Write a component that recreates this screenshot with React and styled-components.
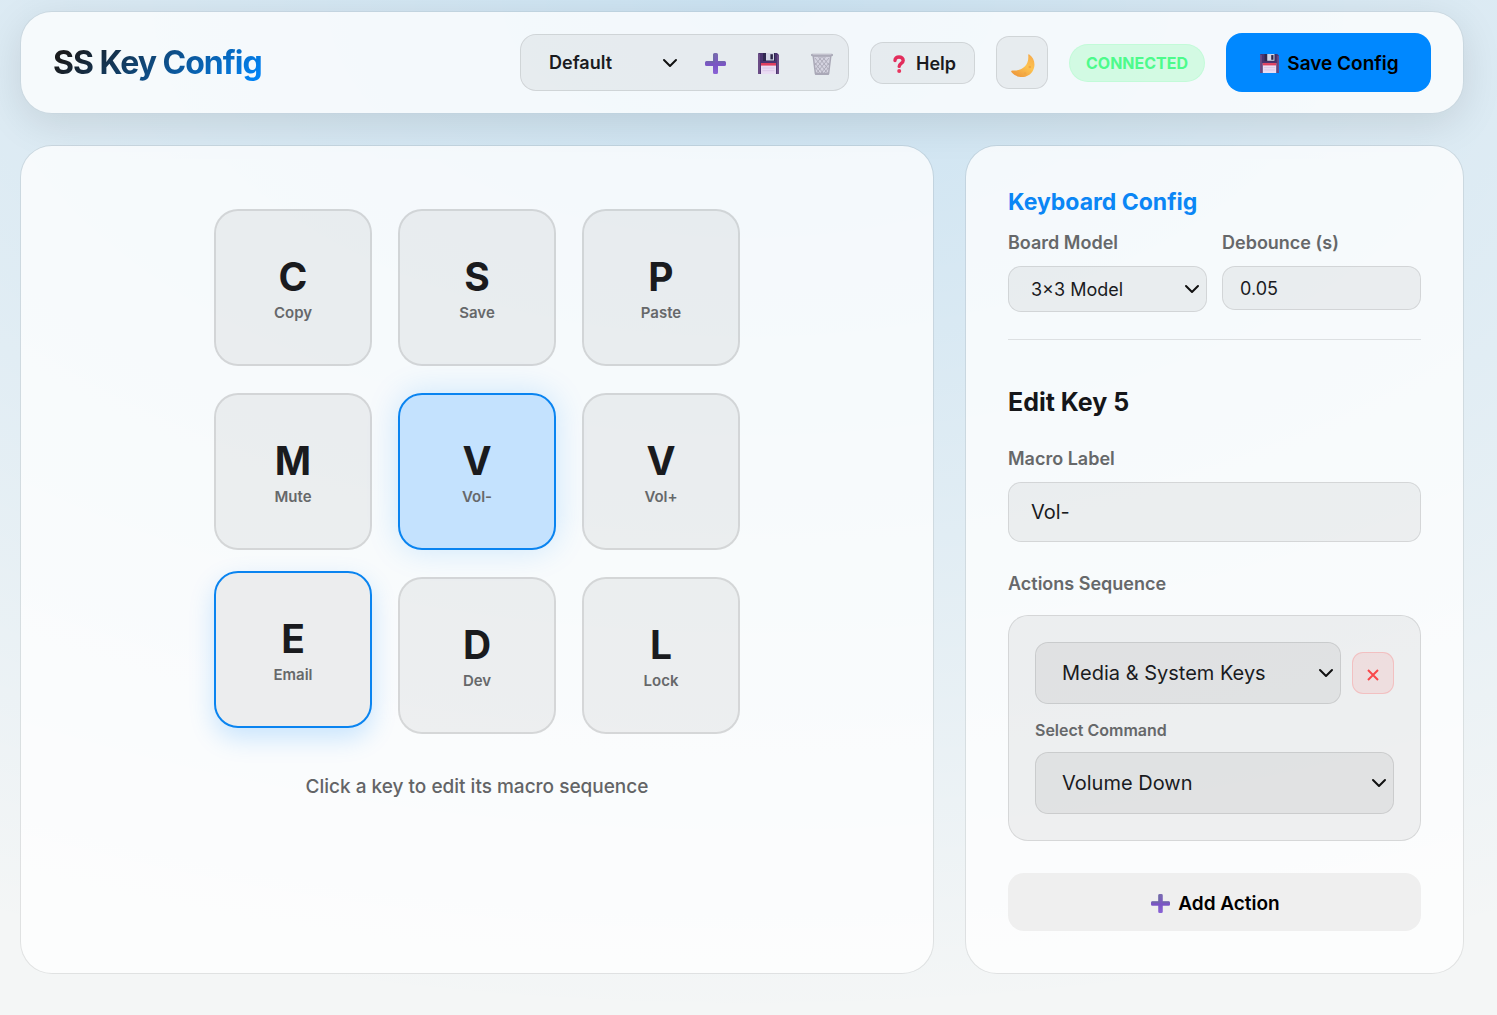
import React, { useId, useState } from "react";
import styled, { createGlobalStyle, css } from "styled-components";

const GlobalStyle = createGlobalStyle`
  *, *::before, *::after { box-sizing: border-box; }
  html { background: #f4f6f6; }
  body {
    margin: 0;
    min-height: 100vh;
    color: #1a1b1e;
    font-family: Inter, "Liberation Sans", sans-serif;
    background:
      radial-gradient(120% 100% at 50% 0%, rgba(0, 130, 220, 0.17), transparent 100%),
      #f4f6f6;
  }
  button, input, select { font-family: inherit; color: inherit; margin: 0; }
  button { cursor: pointer; }
  h1, h2, p { margin: 0; }
`;

const Page = styled.div`
  display: flex;
  flex-direction: column;
  gap: 31px;
  padding: 11px 33px 41px 20px;
`;

const glass = css`
  background: rgba(255, 255, 255, 0.75);
  background-clip: padding-box;
  border: 1px solid rgba(0, 0, 0, 0.08);
  border-radius: 32px;
`;

const Header = styled.header`
  ${glass}
  display: flex;
  align-items: center;
  justify-content: space-between;
  padding: 21px 32px;
  box-shadow: 0 10px 40px rgba(0, 0, 0, 0.1);
`;

const Title = styled.h1`
  font-size: 32px;
  line-height: 40px;
  font-weight: 700;
  letter-spacing: -1px;
  color: transparent;
  background: linear-gradient(135deg, #1a1b1e 10%, #0088ff 100%);
  background-clip: text;
  -webkit-background-clip: text;
`;

const Toolbar = styled.div`
  display: flex;
  align-items: center;
  gap: 21px;
`;

const ProfileBox = styled.div`
  display: flex;
  align-items: center;
  height: 57px;
  padding: 0 0 0 8px;
  border: 1px solid rgba(0, 0, 0, 0.1);
  border-radius: 16px;
  background: rgba(0, 0, 0, 0.05);
`;

const IconButton = styled.button`
  display: grid;
  place-items: center;
  width: 53px;
  height: 42px;
  padding: 2px 0 0;
  border: 0;
  background: none;
  opacity: ${(p) => (p.$faded ? 0.5 : 1)};
`;

const HelpButton = styled.button`
  display: flex;
  align-items: center;
  justify-content: center;
  gap: 9px;
  width: 105px;
  height: 42px;
  padding: 2px 0 0 2px;
  border: 1px solid rgba(0, 0, 0, 0.1);
  border-radius: 13px;
  background: rgba(0, 0, 0, 0.05);
  font-size: 18px;
  font-weight: 600;
`;

const ThemeButton = styled.button`
  display: grid;
  place-items: center;
  width: 52px;
  height: 53px;
  padding: 6px 0 0 2px;
  border: 1px solid rgba(0, 0, 0, 0.1);
  border-radius: 13px;
  background: rgba(0, 0, 0, 0.05);
`;

const Status = styled.span`
  display: grid;
  place-items: center;
  width: 136px;
  height: 38px;
  border: 1px solid rgba(74, 255, 128, 0.12);
  border-radius: 19px;
  background: rgba(74, 255, 128, 0.2);
  color: #4dfb8b;
  font-size: 16px;
  font-weight: 700;
`;

const WideButton = styled.button`
  display: flex;
  align-items: center;
  justify-content: center;
  gap: 8px;
  width: ${(p) => (p.$primary ? "205px" : "100%")};
  height: ${(p) => (p.$primary ? "59px" : "58px")};
  padding: 2px 0 0 2px;
  border: 0;
  border-radius: 16px;
  background: ${(p) => (p.$primary ? "#0088ff" : "#efefef")};
  color: #000;
  font-size: 19px;
  font-weight: 600;
`;

const Main = styled.main`
  display: grid;
  grid-template-columns: minmax(0, 1fr) 499px;
  gap: 31px;
`;

const BoardPanel = styled.section`
  ${glass}
  display: flex;
  flex-direction: column;
  align-items: center;
  gap: 41px;
  padding: 63px 42px 42px;
`;

const KeyGrid = styled.div`
  display: grid;
  grid-template-columns: repeat(3, 158px);
  column-gap: 26px;
  row-gap: 27px;
`;

const Key = styled.button`
  display: flex;
  flex-direction: column;
  align-items: center;
  justify-content: center;
  height: 157px;
  padding: 0;
  border: 2px solid rgba(0, 0, 0, 0.1);
  border-radius: 24px;
  background: rgba(0, 0, 0, 0.05);
  ${(p) =>
    p.$active &&
    css`
      border-color: #0a84f0;
      background: #c4e2fe;
      box-shadow: 0 0 32px rgba(0, 136, 255, 0.18);
    `}
  ${(p) =>
    p.$raised &&
    css`
      border-color: #0a84f0;
      background: #ecedee;
      box-shadow: 0 10px 26px rgba(0, 136, 255, 0.2);
      transform: translateY(-6px);
    `}
`;

const KeyLetter = styled.span`
  font-size: 39px;
  line-height: 50px;
  font-weight: 700;
`;

const KeyName = styled.span`
  font-size: 15px;
  line-height: 22px;
  font-weight: 600;
  color: #66686a;
`;

const Hint = styled.p`
  font-size: 19px;
  line-height: 24px;
  font-weight: 500;
  color: #636466;
`;

const ConfigPanel = styled.section`
  ${glass}
  padding: 42px;
`;

const BoardConfig = styled.div`
  padding-bottom: 27px;
  border-bottom: 1px solid rgba(0, 0, 0, 0.1);
`;

const Heading = styled.h2`
  font-size: ${(p) => (p.$accent ? "23px" : "25px")};
  line-height: 28px;
  font-weight: 700;
  color: ${(p) => (p.$accent ? "#0b86f5" : "#151619")};
`;

const Columns = styled.div`
  display: grid;
  grid-template-columns: 1fr 1fr;
  align-items: start;
  gap: 15px;
  padding-top: 16px;
`;

const Field = styled.div`
  display: flex;
  flex-direction: column;
  gap: ${(p) => p.$gap || 12}px;
`;

const Label = styled.label`
  font-size: ${(p) => (p.$small ? "16px" : "18px")};
  line-height: 22px;
  font-weight: 600;
  color: #66686a;
`;

const inputLook = css`
  width: 100%;
  border: 1px solid rgba(0, 0, 0, 0.1);
  border-radius: 13px;
  background: rgba(0, 0, 0, 0.05);
  outline: 0;
`;

const Input = styled.input`
  ${inputLook}
  height: ${(p) => (p.$large ? "60px" : "44px")};
  padding: ${(p) => (p.$large ? "0 22px" : "0 17px")};
  font-size: ${(p) => (p.$large ? "20px" : "18px")};
`;

const SelectWrap = styled.div`
  display: grid;
  align-items: center;
  flex: 1;
  width: ${(p) => p.$width || "auto"};

  > * { grid-area: 1 / 1; }

  > svg {
    justify-self: end;
    margin-right: ${(p) => (p.$size === "bare" ? "11px" : "7px")};
    pointer-events: none;
  }
`;

const sizes = {
  bare: css`
    height: 42px;
    padding: 0 30px 0 20px;
    border: 0;
    background: none;
    font-size: 18px;
    font-weight: 600;
  `,
  small: css`
    height: 46px;
    padding: 0 30px 0 22px;
    font-size: 18px;
  `,
  large: css`
    height: 62px;
    padding: 0 30px 0 26px;
    font-size: 20px;
  `,
};

const StyledSelect = styled.select`
  ${inputLook}
  appearance: none;
  ${(p) => sizes[p.$size]}
`;

const EditKey = styled.div`
  display: flex;
  flex-direction: column;
  padding-top: 48px;
`;

const Spaced = styled.div`
  padding-top: ${(p) => p.$top}px;
`;

const ActionCard = styled.div`
  display: flex;
  flex-direction: column;
  gap: 15px;
  padding: 26px;
  border: 1px solid rgba(0, 0, 0, 0.1);
  border-radius: 20px;
  background: rgba(0, 0, 0, 0.05);
`;

const ActionRow = styled.div`
  display: flex;
  align-items: center;
  gap: 11px;
`;

const RemoveButton = styled.button`
  display: grid;
  place-items: center;
  width: 42px;
  height: 42px;
  padding: 3px 0 0;
  border: 1px solid rgba(255, 70, 70, 0.2);
  border-radius: 11px;
  background: rgba(255, 77, 77, 0.1);
  color: #f9474a;
`;

function Chevron() {
  return (
    <svg width="16" height="12" viewBox="0 0 16 12" fill="none" aria-hidden="true">
      <path d="M2 3l6 6 6-6" stroke="#111" strokeWidth="2" strokeLinecap="round" strokeLinejoin="round" />
    </svg>
  );
}

function Select({ size, width, children, ...rest }) {
  return (
    <SelectWrap $width={width} $size={size}>
      <StyledSelect $size={size} {...rest}>{children}</StyledSelect>
      <Chevron />
    </SelectWrap>
  );
}

function PlusIcon({ size = 21 }) {
  const id = useId();
  return (
    <svg width={size} height={size} viewBox="0 0 21 21" aria-hidden="true">
      <defs>
        <linearGradient id={id} x1="0" y1="0" x2="0" y2="1">
          <stop offset="0" stopColor="#7a6bb0" />
          <stop offset="0.55" stopColor="#7a55c4" />
          <stop offset="1" stopColor="#8a63d6" />
        </linearGradient>
      </defs>
      <path
        fill={`url(#${id})`}
        d="M9.500 0h2q1.500 0 1.500 1.500V8h6.500Q21 8 21 9.500v2q0 1.500-1.500 1.500H13v6.500q0 1.500-1.500 1.500h-2Q8 21 8 19.500V13H1.500Q0 13 0 11.500v-2Q0 8 1.500 8H8V1.500Q8 0 9.500 0z"
      />
      <path d="M1.200 9H9V1.200M13 9h6.800" fill="none" stroke="#68709a" strokeWidth="1.200" opacity="0.7" />
    </svg>
  );
}

function DiskIcon({ size = 21 }) {
  return (
    <svg width={size} height={size} viewBox="0 0 21 21" aria-hidden="true">
      <path d="M1 0h18l2 2v18q0 1-1 1H1q-1 0-1-1V1q0-1 1-1z" fill="#4b3470" />
      <path d="M0 1h2v20H1q-1 0-1-1z" fill="#6b4c86" />
      <path d="M19 2h2v18q0 1-1 1h-1z" fill="#6b4c86" />
      <path d="M5 0h12v8H5z" fill="#2f2850" />
      <path d="M8 0h8v7.5H8z" fill="#d3d6e6" />
      <path d="M12.4 1.2h2.5v5.2h-2.5z" fill="#2c2548" />
      <path d="M3 10h15v11H3z" fill="#eadcf3" />
      <path d="M3 10h15v2.6H3z" fill="#e0405f" />
      <path d="M4.5 15h12M4.5 17.7h12" stroke="#d4bfe2" strokeWidth="0.8" />
    </svg>
  );
}

function TrashIcon() {
  return (
    <svg width="22" height="22" viewBox="0 0 22 22" fill="none" aria-hidden="true">
      <path d="M2.2 3h17.6L17.6 20.5q-.1 1-1.2 1H5.6q-1.1 0-1.2-1z" fill="#c4bcd2" stroke="#6f6880" strokeWidth="1.5" />
      <path
        d="M4 5l12.500 15M7.500 4l9.800 12M11.500 4l6.500 8M4 10l8.800 11M4.600 15l5 6M18 5L5.500 20M14.400 4L4.800 16M10.500 4L4 12M18 10l-8.600 11M17.400 15l-5 6"
        stroke="#6f6880"
        strokeWidth="0.9"
      />
      <path d="M1.200 2h19.600" stroke="#6f6880" strokeWidth="2.600" strokeLinecap="round" />
      <path d="M2 1.600h18" stroke="#b5aec2" strokeWidth="0.800" strokeLinecap="round" />
      <path d="M4.800 20.700h12.400" stroke="#6f6880" strokeWidth="1.800" strokeLinecap="round" />
    </svg>
  );
}

function QuestionIcon() {
  return (
    <svg width="16" height="18" viewBox="0 0 16 18" fill="none" aria-hidden="true">
      <path d="M4 5.600C4 3.200 5.700 2 8 2s4.200 1.300 4.200 3.500c0 2.900-4 2.900-4 5.900" stroke="#e22d5c" strokeWidth="3.400" strokeLinecap="round" />
      <circle cx="8.200" cy="16" r="2" fill="#e8365f" />
    </svg>
  );
}

function MoonIcon() {
  const id = useId();
  return (
    <svg width="26" height="26" viewBox="0 0 26 26" aria-hidden="true">
      <defs>
        <linearGradient id={id} x1="0.900" y1="0" x2="0.300" y2="1">
          <stop offset="0" stopColor="#f6a94a" />
          <stop offset="0.500" stopColor="#fdc350" />
          <stop offset="1" stopColor="#ee9a3c" />
        </linearGradient>
      </defs>
      <path d="M19.300 1.400C24.200 4.800 26 11.500 23 17.500 19.300 24.800 8.500 27 1.600 19.200q-1.200-1.700.8-1.800C11.500 18.500 19.500 12.500 18.200 2q0-1.300 1.100-.6z" fill={`url(#${id})`} />
      <circle cx="19.800" cy="14" r="1.300" fill="#f0a743" />
      <circle cx="15" cy="20.500" r="1.300" fill="#f0a743" />
    </svg>
  );
}

const KEYS = [
  ["C", "Copy"], ["S", "Save"], ["P", "Paste"],
  ["M", "Mute"], ["V", "Vol-"], ["V", "Vol+"],
  ["E", "Email"], ["D", "Dev"], ["L", "Lock"],
];

export default function App() {
  const [active, setActive] = useState(4);
  const [label, setLabel] = useState("Vol-");
  const [debounce, setDebounce] = useState("0.05");

  const pick = (index) => {
    setActive(index);
    setLabel(KEYS[index][1]);
  };

  return (
    <>
      <GlobalStyle />
      <Page>
        <Header>
          <Title>SS Key Config</Title>
          <Toolbar>
            <ProfileBox>
              <Select size="bare" width="160px" aria-label="Profile">
                <option>Default</option>
              </Select>
              <IconButton aria-label="New profile"><PlusIcon /></IconButton>
              <IconButton aria-label="Save profile"><DiskIcon /></IconButton>
              <IconButton aria-label="Delete profile" $faded><TrashIcon /></IconButton>
            </ProfileBox>
            <HelpButton><QuestionIcon />Help</HelpButton>
            <ThemeButton aria-label="Toggle theme"><MoonIcon /></ThemeButton>
            <Status>CONNECTED</Status>
            <WideButton $primary><DiskIcon size={19} />Save Config</WideButton>
          </Toolbar>
        </Header>
        <Main>
          <BoardPanel>
            <KeyGrid>
              {KEYS.map(([letter, name], index) => (
                <Key
                  key={name}
                  $active={index === active}
                  $raised={index === 6}
                  onClick={() => pick(index)}
                >
                  <KeyLetter>{letter}</KeyLetter>
                  <KeyName>{name}</KeyName>
                </Key>
              ))}
            </KeyGrid>
            <Hint>Click a key to edit its macro sequence</Hint>
          </BoardPanel>
          <ConfigPanel>
            <BoardConfig>
              <Heading $accent>Keyboard Config</Heading>
              <Columns>
                <Field>
                  <Label htmlFor="model">Board Model</Label>
                  <Select size="small" id="model">
                    <option>3×3 Model</option>
                  </Select>
                </Field>
                <Field>
                  <Label htmlFor="debounce">Debounce (s)</Label>
                  <Input id="debounce" value={debounce} onChange={(e) => setDebounce(e.target.value)} />
                </Field>
              </Columns>
            </BoardConfig>
            <EditKey>
              <Heading>Edit Key {active + 1}</Heading>
              <Spaced $top={32}>
                <Field>
                  <Label htmlFor="macro">Macro Label</Label>
                  <Input id="macro" $large value={label} onChange={(e) => setLabel(e.target.value)} />
                </Field>
              </Spaced>
              <Spaced $top={31}>
                <Field $gap={20}>
                  <Label as="span">Actions Sequence</Label>
                  <ActionCard>
                    <ActionRow>
                      <Select size="large" aria-label="Action type">
                        <option>Media &amp; System Keys</option>
                      </Select>
                      <RemoveButton aria-label="Remove action">
                        <svg width="12" height="12" viewBox="0 0 12 12" aria-hidden="true">
                          <path d="M1 1l10 10M11 1L1 11" stroke="currentColor" strokeWidth="2" />
                        </svg>
                      </RemoveButton>
                    </ActionRow>
                    <Field $gap={11}>
                      <Label $small htmlFor="command">Select Command</Label>
                      <Select size="large" id="command">
                        <option>Volume Down</option>
                      </Select>
                    </Field>
                  </ActionCard>
                </Field>
              </Spaced>
              <Spaced $top={32}>
                <WideButton><PlusIcon size={19} />Add Action</WideButton>
              </Spaced>
            </EditKey>
          </ConfigPanel>
        </Main>
      </Page>
    </>
  );
}
